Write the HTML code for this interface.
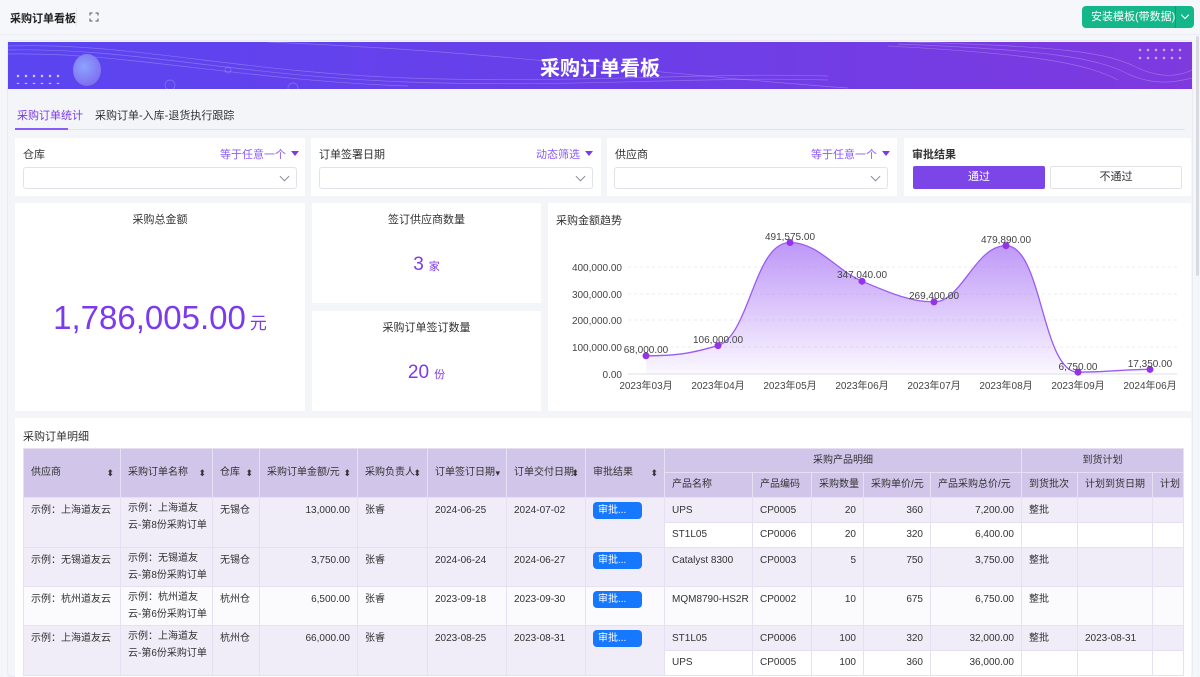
<!DOCTYPE html>
<html><head><meta charset="utf-8">
<style>
*{box-sizing:border-box;margin:0;padding:0}
body{width:1200px;height:677px;overflow:hidden;background:#f5f6fa;font-family:"Liberation Sans","Noto Sans CJK SC",sans-serif;color:#333;font-size:12px;position:relative}
.a{position:absolute}
.card{position:absolute;background:#fff}
.top{left:0;top:0;width:1200px;height:35px;background:#f6f7fb;border-bottom:1px solid #eceef3}
.sel{position:absolute;height:22px;border:1px solid #e1e3e8;border-radius:3px;background:#fff}
.sel:after{content:"";position:absolute;right:8px;top:5px;width:6px;height:6px;border-right:1px solid #8a8f99;border-bottom:1px solid #8a8f99;transform:rotate(45deg)}
.flab{position:absolute;top:8px;left:8px;font-size:11px;color:#333}
.fop{position:absolute;top:8px;font-size:11px;color:#8b5cf6}
.fop:after{content:"";display:inline-block;margin-left:5px;border-left:4px solid transparent;border-right:4px solid transparent;border-top:5px solid #7c3aed;vertical-align:2px}
.ct{position:absolute;width:100%;text-align:center;top:8px;font-size:11px;color:#333}
table{border-collapse:collapse;table-layout:fixed;font-size:10px}
td,th{border:1px solid #e6e1f2;padding:0 7px;font-weight:normal;text-align:left;color:#333;white-space:nowrap;overflow:hidden;line-height:14px}
th{background:#d2c5ea;color:#333;position:relative}
.r{text-align:right}
.sort{position:absolute;right:6px;top:50%;margin-top:-7px;font-size:9px;color:#333}
.btn{display:inline-block;background:#1677ff;color:#fff;border-radius:4px;width:49px;height:17px;line-height:17px;padding-left:5px;font-size:10px}
.vt td{vertical-align:top;padding-top:6px}
.nm{line-height:17px!important;padding-top:2px!important}
</style></head><body>
<div class="a top"></div>
<div class="a" style="left:10px;top:10px;font-size:11px;font-weight:bold;color:#222">采购订单看板</div>
<div class="a" style="left:76px;top:8px;width:1px;height:18px;background:#e5e7eb"></div>
<svg class="a" style="left:89px;top:12px" width="10" height="10" viewBox="0 0 10 10" fill="none" stroke="#555" stroke-width="1"><path d="M1 3.5V1h2.5M6.5 1H9v2.5M9 6.5V9H6.5M3.5 9H1V6.5"/></svg>
<div class="a" style="left:1082px;top:6px;width:112px;height:22px;background:#13b78a;border-radius:4px;color:#fff;font-size:11px;line-height:22px;padding-left:9px">安装模板(带数据)</div>
<div class="a" style="left:1175px;top:6px;width:1px;height:22px;background:#0e9a73"></div>
<div class="a" style="left:1182px;top:12px;width:6px;height:6px;border-right:1px solid #fff;border-bottom:1px solid #fff;transform:rotate(45deg)"></div>

<div class="a" style="left:7px;top:40px;width:1186px;height:637px;background:#f3f5f9;border:1px solid #e8ebf2;border-radius:4px"></div>
<div class="a" style="left:8px;top:42px;width:1184px;height:47px;background:linear-gradient(90deg,#5a45f1 0%,#6a3fe8 50%,#7e39df 100%);overflow:hidden">
<svg width="1184" height="47" style="position:absolute;left:0;top:0" fill="none" stroke="rgba(255,255,255,0.25)" stroke-width="0.7">
<path d="M0 4C120 0 230 30 400 36 560 42 700 30 820 34"/><path d="M0 8C120 5 230 34 400 40 560 46 700 34 820 38"/><path d="M0 12C120 10 230 38 400 44"/><path d="M260 0C500 10 620 30 840 46"/>
<path d="M900 0C1050 4 1100 10 1130 26 1160 40 1180 30 1184 28"/><path d="M890 2C1040 8 1090 16 1120 32 1150 46 1175 38 1184 36"/><path d="M880 4C1030 12 1080 22 1110 38"/>
<circle cx="220" cy="28" r="3"/><circle cx="162" cy="43" r="5"/><circle cx="285" cy="46" r="5"/>
</svg>
<div style="position:absolute;left:65px;top:12px;width:28px;height:32px;border-radius:50%;background:radial-gradient(circle at 40% 40%,#8da2ff,#7a5ee8)"></div>
<div style="position:absolute;left:6px;top:30px;width:50px;height:12px;background-image:radial-gradient(circle,rgba(255,255,255,.7) 1px,transparent 1.5px);background-size:8px 8px"></div>
<div style="position:absolute;left:1128px;top:4px;width:50px;height:16px;background-image:radial-gradient(circle,rgba(255,255,255,.6) 1px,transparent 1.5px);background-size:8px 8px"></div>
<div style="position:absolute;width:100%;text-align:center;top:10px;color:#fff;font-size:20px;font-weight:bold">采购订单看板</div>
</div>

<div class="a" style="left:17px;top:107px;font-size:11px;color:#7c3aed">采购订单统计</div>
<div class="a" style="left:95px;top:107px;font-size:11px;color:#333">采购订单-入库-退货执行跟踪</div>
<div class="a" style="left:15px;top:129px;width:1170px;height:1px;background:#e3e5ea"></div>
<div class="a" style="left:15px;top:128px;width:53px;height:2px;background:#8b5cf6"></div>

<div class="card" style="left:15px;top:138px;width:290px;height:58px"><div class="flab">仓库</div><div class="fop" style="left:205px">等于任意一个</div><div class="sel" style="left:8px;top:29px;width:274px"></div></div>
<div class="card" style="left:311px;top:138px;width:290px;height:58px"><div class="flab">订单签署日期</div><div class="fop" style="left:225px">动态筛选</div><div class="sel" style="left:8px;top:29px;width:274px"></div></div>
<div class="card" style="left:607px;top:138px;width:290px;height:58px"><div class="flab">供应商</div><div class="fop" style="left:204px">等于任意一个</div><div class="sel" style="left:7px;top:29px;width:274px"></div></div>
<div class="card" style="left:904px;top:138px;width:287px;height:58px"><div class="flab" style="font-weight:bold">审批结果</div>
<div class="a" style="left:9px;top:28px;width:132px;height:23px;background:#7c45e8;border-radius:2px;color:#fff;text-align:center;line-height:23px;font-size:11px">通过</div>
<div class="a" style="left:146px;top:28px;width:132px;height:23px;border:1px solid #e1e3e8;border-radius:2px;text-align:center;line-height:21px;font-size:11px">不通过</div></div>

<div class="card" style="left:15px;top:203px;width:290px;height:208px"><div class="ct">采购总金额</div>
<div class="a" style="left:0;width:100%;text-align:center;top:96px;color:#7c3aed;font-size:33px">1,786,005.00<span style="font-size:17px;margin-left:4px">元</span></div></div>
<div class="card" style="left:312px;top:203px;width:229px;height:100px"><div class="ct">签订供应商数量</div>
<div class="a" style="width:100%;text-align:center;top:51px;color:#7c3aed;font-size:19px">3<span style="font-size:11px;margin-left:5px">家</span></div></div>
<div class="card" style="left:312px;top:311px;width:229px;height:100px"><div class="ct">采购订单签订数量</div>
<div class="a" style="width:100%;text-align:center;top:51px;color:#7c3aed;font-size:19px">20<span style="font-size:11px;margin-left:5px">份</span></div></div>

<div class="card" style="left:548px;top:203px;width:643px;height:208px"><div class="a" style="left:8px;top:9px;font-size:11px">采购金额趋势</div></div>
<svg class="a" style="left:548px;top:203px" width="643" height="208" viewBox="548 203 643 208" font-family="Liberation Sans, DejaVu Sans, sans-serif" font-size="10" fill="#444">
<defs><linearGradient id="g" x1="0" y1="0" x2="0" y2="1"><stop offset="0" stop-color="#a874f5" stop-opacity=".75"/><stop offset="1" stop-color="#a874f5" stop-opacity=".05"/></linearGradient></defs>
<g stroke="#ececf2" stroke-dasharray="3 3"><line x1="628" x2="1177" y1="267" y2="267"/><line x1="628" x2="1177" y1="294" y2="294"/><line x1="628" x2="1177" y1="320" y2="320"/><line x1="628" x2="1177" y1="347" y2="347"/></g>
<line x1="628" x2="1177" y1="374" y2="374" stroke="#e0e0e8"/>
<path d="M646,355.8 C682,355.8 695,352 718,345.6 C750,335 754,242.5 790,242.5 C818,242.5 836,270 862,281.2 C892,294 912,301.9 934,301.9 C962,301.9 975,245.6 1006,245.6 C1042,245.6 1042,372.2 1078,372.2 C1114,372.2 1114,369.4 1150,369.4 L1150,374 L646,374Z" fill="url(#g)"/>
<path d="M646,355.8 C682,355.8 695,352 718,345.6 C750,335 754,242.5 790,242.5 C818,242.5 836,270 862,281.2 C892,294 912,301.9 934,301.9 C962,301.9 975,245.6 1006,245.6 C1042,245.6 1042,372.2 1078,372.2 C1114,372.2 1114,369.4 1150,369.4" fill="none" stroke="#9a5cf2" stroke-width="1.3"/>
<g fill="#9333ea"><circle cx="646" cy="355.8" r="3.5"/><circle cx="718" cy="345.6" r="3.5"/><circle cx="790" cy="242.5" r="3.5"/><circle cx="862" cy="281.2" r="3.5"/><circle cx="934" cy="301.9" r="3.5"/><circle cx="1006" cy="245.6" r="3.5"/><circle cx="1078" cy="372.2" r="3.5"/><circle cx="1150" cy="369.4" r="3.5"/></g>
<g text-anchor="end"><text x="622" y="271">400,000.00</text><text x="622" y="298">300,000.00</text><text x="622" y="324">200,000.00</text><text x="622" y="351">100,000.00</text><text x="622" y="378">0.00</text></g>
<g text-anchor="middle"><text x="646" y="389">2023年03月</text><text x="718" y="389">2023年04月</text><text x="790" y="389">2023年05月</text><text x="862" y="389">2023年06月</text><text x="934" y="389">2023年07月</text><text x="1006" y="389">2023年08月</text><text x="1078" y="389">2023年09月</text><text x="1150" y="389">2024年06月</text>
<text x="646" y="353">68,000.00</text><text x="718" y="343">106,000.00</text><text x="790" y="240">491,575.00</text><text x="862" y="278">347,040.00</text><text x="934" y="299">269,400.00</text><text x="1006" y="243">479,890.00</text><text x="1078" y="370">6,750.00</text><text x="1150" y="367">17,350.00</text></g>
</svg>

<div class="card" style="left:15px;top:418px;width:1176px;height:259px;overflow:hidden">
<div class="a" style="left:8px;top:10px;font-size:11px">采购订单明细</div>
<table class="a" style="left:8px;top:30px;width:1160px">
<colgroup><col style="width:97px"><col style="width:92px"><col style="width:47px"><col style="width:98px"><col style="width:70px"><col style="width:79px"><col style="width:79px"><col style="width:79px"><col style="width:88px"><col style="width:59px"><col style="width:52px"><col style="width:67px"><col style="width:91px"><col style="width:56px"><col style="width:75px"><col style="width:31px"></colgroup>
<tr style="height:24px"><th rowspan="2">供应商<span class="sort">⬍</span></th><th rowspan="2">采购订单名称<span class="sort">⬍</span></th><th rowspan="2">仓库<span class="sort">⬍</span></th><th rowspan="2">采购订单金额/元<span class="sort">⬍</span></th><th rowspan="2">采购负责人<span class="sort">⬍</span></th><th rowspan="2">订单签订日期<span class="sort">▾</span></th><th rowspan="2">订单交付日期<span class="sort">⬍</span></th><th rowspan="2">审批结果<span class="sort">⬍</span></th><th colspan="5" style="text-align:center">采购产品明细</th><th colspan="3" style="text-align:center">到货计划</th></tr>
<tr style="height:25px"><th>产品名称</th><th>产品编码</th><th>采购数量</th><th>采购单价/元</th><th>产品采购总价/元</th><th>到货批次</th><th>计划到货日期</th><th>计划</th></tr>
<tr style="height:25px;background:#f0ecf8" class="vt"><td rowspan="2">示例：上海道友云</td><td rowspan="2" class="nm">示例：上海道友<br>云-第8份采购订单</td><td rowspan="2">无锡仓</td><td rowspan="2" class="r">13,000.00</td><td rowspan="2">张睿</td><td rowspan="2">2024-06-25</td><td rowspan="2">2024-07-02</td><td rowspan="2" style="padding-top:4px"><span class="btn">审批...</span></td><td>UPS</td><td>CP0005</td><td class="r">20</td><td class="r">360</td><td class="r">7,200.00</td><td>整批</td><td></td><td></td></tr>
<tr style="height:25px;background:#fff"><td>ST1L05</td><td>CP0006</td><td class="r">20</td><td class="r">320</td><td class="r">6,400.00</td><td></td><td></td><td></td></tr>
<tr style="height:39px;background:#f0ecf8" class="vt"><td>示例：无锡道友云</td><td class="nm">示例：无锡道友<br>云-第8份采购订单</td><td>无锡仓</td><td class="r">3,750.00</td><td>张睿</td><td>2024-06-24</td><td>2024-06-27</td><td style="padding-top:4px"><span class="btn">审批...</span></td><td>Catalyst 8300</td><td>CP0003</td><td class="r">5</td><td class="r">750</td><td class="r">3,750.00</td><td>整批</td><td></td><td></td></tr>
<tr style="height:39px;background:#fbfafd" class="vt"><td>示例：杭州道友云</td><td class="nm">示例：杭州道友<br>云-第6份采购订单</td><td>杭州仓</td><td class="r">6,500.00</td><td>张睿</td><td>2023-09-18</td><td>2023-09-30</td><td style="padding-top:4px"><span class="btn">审批...</span></td><td>MQM8790-HS2R</td><td>CP0002</td><td class="r">10</td><td class="r">675</td><td class="r">6,750.00</td><td>整批</td><td></td><td></td></tr>
<tr style="height:25px;background:#f0ecf8" class="vt"><td rowspan="2">示例：上海道友云</td><td rowspan="2" class="nm">示例：上海道友<br>云-第6份采购订单</td><td rowspan="2">杭州仓</td><td rowspan="2" class="r">66,000.00</td><td rowspan="2">张睿</td><td rowspan="2">2023-08-25</td><td rowspan="2">2023-08-31</td><td rowspan="2" style="padding-top:4px"><span class="btn">审批...</span></td><td>ST1L05</td><td>CP0006</td><td class="r">100</td><td class="r">320</td><td class="r">32,000.00</td><td>整批</td><td>2023-08-31</td><td></td></tr>
<tr style="height:25px;background:#fff"><td>UPS</td><td>CP0005</td><td class="r">100</td><td class="r">360</td><td class="r">36,000.00</td><td></td><td></td><td></td></tr>
</table>
</div>
<div class="a" style="left:1196px;top:36px;width:3px;height:240px;background:#d8dae0;border-radius:2px"></div>
</body></html>
